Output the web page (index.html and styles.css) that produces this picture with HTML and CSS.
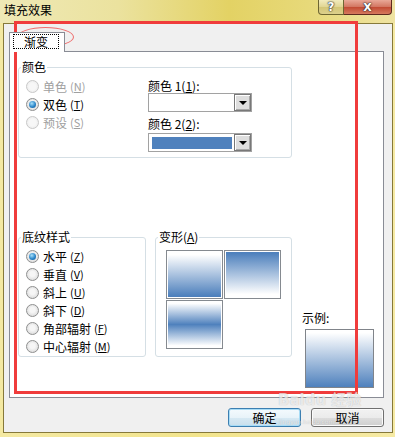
FILE: index.html
```html
<!DOCTYPE html>
<html lang="zh-CN">
<head>
    <meta charset="UTF-8">
    <meta name="viewport" content="width=device-width, initial-scale=1.0">
    <title>填充效果</title>
    <link rel="stylesheet" href="styles.css">
</head>
<body>
    <div class="window">
        <div class="titlebar">
            <span class="title">填充效果</span>
            <div class="caption-buttons">
                <span class="cap-help">?</span>
                <span class="cap-close">X</span>
            </div>
        </div>

        <div class="client">
            <div class="tabs">
                <span class="tab"><span class="tab-focus">渐变</span></span>
            </div>

            <div class="panel">
                <fieldset class="group group-color">
                    <legend>颜色</legend>
                    <div class="color-body">
                        <div class="radio-list">
                            <div class="radio-row disabled"><span class="radio"></span>单色 <span class="key">(<u>N</u>)</span></div>
                            <div class="radio-row"><span class="radio checked"></span>双色 <span class="key">(<u>T</u>)</span></div>
                            <div class="radio-row disabled"><span class="radio"></span>预设 <span class="key">(<u>S</u>)</span></div>
                        </div>
                        <div class="pickers">
                            <div class="pick-label">颜色 1(<u>1</u>):</div>
                            <div class="combo"><span class="combo-value"></span><span class="combo-btn"></span></div>
                            <div class="pick-label second">颜色 2(<u>2</u>):</div>
                            <div class="combo second"><span class="combo-value"><span class="swatch-fill"></span></span><span class="combo-btn"></span></div>
                        </div>
                    </div>
                </fieldset>

                <div class="bottom-row">
                    <fieldset class="group group-pattern">
                        <legend>底纹样式</legend>
                        <div class="radio-list">
                            <div class="radio-row"><span class="radio checked"></span>水平 <span class="key">(<u>Z</u>)</span></div>
                            <div class="radio-row"><span class="radio"></span>垂直 <span class="key">(<u>V</u>)</span></div>
                            <div class="radio-row"><span class="radio"></span>斜上 <span class="key">(<u>U</u>)</span></div>
                            <div class="radio-row"><span class="radio"></span>斜下 <span class="key">(<u>D</u>)</span></div>
                            <div class="radio-row"><span class="radio"></span>角部辐射 <span class="key">(<u>F</u>)</span></div>
                            <div class="radio-row"><span class="radio"></span>中心辐射 <span class="key">(<u>M</u>)</span></div>
                        </div>
                    </fieldset>

                    <fieldset class="group group-variant">
                        <legend>变形(<u>A</u>)</legend>
                        <div class="variants">
                            <span class="variant v-down"></span>
                            <span class="variant v-up"></span>
                            <span class="variant v-mid"></span>
                        </div>
                    </fieldset>

                    <div class="sample">
                        <div class="sample-label">示例:</div>
                        <div class="sample-box"></div>
                    </div>
                </div>
            </div>

            <div class="actions">
                <button class="btn btn-default">确定</button>
                <button class="btn">取消</button>
            </div>
        </div>

        <!-- annotations drawn over the dialog -->
        <div class="mark-rect"></div>
        <div class="mark-ellipse"></div>
        <div class="watermark">
            <span class="wm-big">Baidu 经验</span>
            <span class="wm-small">jingyan.baidu.com</span>
        </div>
    </div>
</body>
</html>
```

FILE: styles.css
```css
* {
    box-sizing: border-box;
}
body {
    margin: 0;
    width: 395px;
    height: 437px;
    overflow: hidden;
    font-family: "Noto Sans CJK SC", "DejaVu Sans", sans-serif;
    font-size: 12px;
    color: #000;
}
.window {
    position: relative;
    width: 395px;
    height: 437px;
    display: flex;
    flex-direction: column;
    background: linear-gradient(90deg, #f4e9a2, #f2e48c 50%, #f6eaa4);
}
.titlebar {
    height: 23px;
    display: flex;
    justify-content: space-between;
    align-items: flex-start;
    background: linear-gradient(90deg, #efe9b6 0%, #ebe29e 30%, #e3d264 58%, #e7d979 78%, #efe3a2 100%);
}
.title {
    padding: 3px 0 0 4px;
    line-height: 14px;
}
.caption-buttons {
    display: flex;
    height: 15px;
    margin-right: 3px;
}
.cap-help,
.cap-close {
    display: flex;
    justify-content: center;
    align-items: center;
    height: 15px;
    color: #fff;
    font-family: "DejaVu Sans", sans-serif;
    font-weight: bold;
    text-shadow: 0 0 1px #333, 0 0 1px #333, 0 0 2px #333;
}
.cap-help {
    width: 26px;
    font-size: 12px;
    border: 1px solid #6e6632;
    border-top: none;
    border-radius: 0 0 0 4px;
    background: linear-gradient(#f2ebbd, #e0d592 50%, #d3c676 51%, #ddd08c);
}
.cap-close {
    width: 48px;
    font-size: 11px;
    border: 1px solid #5e2a1f;
    border-top: none;
    border-left: none;
    border-radius: 0 0 4px 0;
    background: linear-gradient(#e9a897, #d27560 50%, #c24a33 51%, #d67a5e);
}
.client {
    flex: 1;
    margin: 0 2px 4px 3px;
    border: 1px solid #86793a;
    background: #f0f0f0;
    padding: 8px 8px 5px 5px;
    display: flex;
    flex-direction: column;
}
.tabs {
    display: flex;
    height: 20px;
    position: relative;
    z-index: 1;
}
.tab {
    width: 56px;
    height: 20px;
    background: #fff;
    border: 1px solid #898c95;
    border-bottom: none;
    padding: 1px 0 0 3px;
}
.tab-focus {
    display: block;
    width: 46px;
    height: 15px;
    border: 1px dotted #000;
    line-height: 13px;
    text-align: center;
}
.panel {
    height: 347px;
    margin-top: -1px;
    border: 1px solid #898c95;
    background: #fff;
    padding: 8px 0 0 8px;
}
.group {
    margin: 0;
    padding: 0;
    min-width: 0;
    border: 1px solid #d5dfe5;
    border-radius: 3px;
}
.group legend {
    margin-left: 2px;
    padding: 0 1px;
    line-height: 14px;
}
.group-color {
    width: 274px;
}
.color-body {
    display: grid;
    grid-template-columns: 129px auto;
}
.radio-list {
    padding: 3px 0 0 7px;
}
.radio-row {
    display: flex;
    align-items: center;
    height: 18px;
    white-space: nowrap;
}
.radio-row.disabled {
    color: #a0a0a0;
}
.key {
    font-size: 11px;
    margin-left: 3px;
}
.radio {
    position: relative;
    width: 13px;
    height: 13px;
    margin-right: 4px;
    border: 1px solid #8e8f8f;
    border-radius: 50%;
    background: radial-gradient(circle at 50% 45%, #f6f6f6 30%, #dcdcdc 80%);
}
.disabled .radio {
    border-color: #c8c8c8;
    background: radial-gradient(circle, #f7f7f7 40%, #e8e8e8);
}
.radio.checked::after {
    content: "";
    position: absolute;
    left: 2px;
    top: 2px;
    width: 7px;
    height: 7px;
    border-radius: 50%;
    background: radial-gradient(circle at 40% 35%, #a8e0fa, #2b86c9 55%, #0e4f8c);
}
.pickers {
    padding: 5px 0 5px 0;
}
.pick-label {
    line-height: 14px;
}
.pick-label.second {
    margin-top: 5px;
}
.combo {
    display: flex;
    width: 104px;
    height: 19px;
    border: 1px solid #a2a2a2;
    background: #fff;
}
.combo.second {
    margin-top: 2px;
}
.combo-value {
    flex: 1;
    padding: 3px 2px 2px 3px;
}
.swatch-fill {
    display: block;
    height: 100%;
    background: #4f81bd;
}
.combo-btn {
    width: 17px;
    display: flex;
    justify-content: center;
    align-items: center;
    border: 1px solid #787878;
    background: #dedede;
    box-shadow: inset 1px 1px #fff, inset -1px -1px #a8a8a8;
}
.combo-btn::after {
    content: "";
    border-left: 4px solid transparent;
    border-right: 4px solid transparent;
    border-top: 4px solid #000;
}
.bottom-row {
    display: flex;
    align-items: flex-start;
    margin-top: 72px;
}
.group-pattern {
    width: 128px;
    height: 127px;
}
.group-variant {
    width: 137px;
    height: 127px;
    margin-left: 9px;
}
.variants {
    display: grid;
    grid-template-columns: 57px 57px;
    grid-auto-rows: 49px;
    gap: 1px;
    padding: 6px 0 0 10px;
}
.variant {
    border: 1px solid #858a90;
    box-shadow: inset 0 0 0 1px #fff;
}
.v-down {
    background: linear-gradient(#fff 8%, #4f81bd 95%);
}
.v-up {
    background: linear-gradient(#4f81bd 5%, #fff 92%);
}
.v-mid {
    background: linear-gradient(#fff 5%, #4f81bd 50%, #fff 95%);
}
.sample {
    margin: 81px 0 0 10px;
}
.sample-label {
    line-height: 14px;
}
.sample-box {
    width: 69px;
    height: 59px;
    margin: 4px 0 0 3px;
    border: 1px solid #80848a;
    background: linear-gradient(#fff 5%, #4f81bd 100%);
}
.actions {
    display: flex;
    justify-content: flex-end;
    gap: 10px;
    margin-top: 10px;
}
.btn {
    width: 73px;
    height: 19px;
    padding: 0;
    font: inherit;
    line-height: 15px;
    border: 1px solid #707070;
    border-radius: 3px;
    background: linear-gradient(#f2f2f2, #ebebeb 50%, #dddddd 51%, #cfcfcf);
    box-shadow: inset 0 0 0 1px #fbfbfb;
}
.btn-default {
    border-color: #3c7fb1;
    background: linear-gradient(#f4fafd, #e8f3f9 50%, #d7e9f3 51%, #c9dfec);
    box-shadow: inset 0 0 0 1px #a8dcf6;
}
.mark-rect {
    position: absolute;
    left: 14px;
    top: 21px;
    width: 344px;
    height: 373px;
    border: 3px solid #f03c3c;
}
.mark-ellipse {
    position: absolute;
    left: 17px;
    top: 27px;
    width: 57px;
    height: 20px;
    border: 1px solid #ee6d6d;
    border-radius: 50%;
}
.watermark {
    position: absolute;
    left: 278px;
    top: 392px;
    display: flex;
    flex-direction: column;
    color: rgba(255, 255, 255, 0.7);
    text-shadow: 0 0 1px rgba(0, 0, 0, 0.25);
    pointer-events: none;
}
.wm-big {
    font-family: "DejaVu Sans", "Noto Sans CJK SC", sans-serif;
    font-size: 15px;
    font-weight: bold;
    line-height: 16px;
}
.wm-small {
    font-family: "DejaVu Sans", sans-serif;
    font-size: 6px;
    line-height: 8px;
    margin: 10px 0 0 1px;
}
```
